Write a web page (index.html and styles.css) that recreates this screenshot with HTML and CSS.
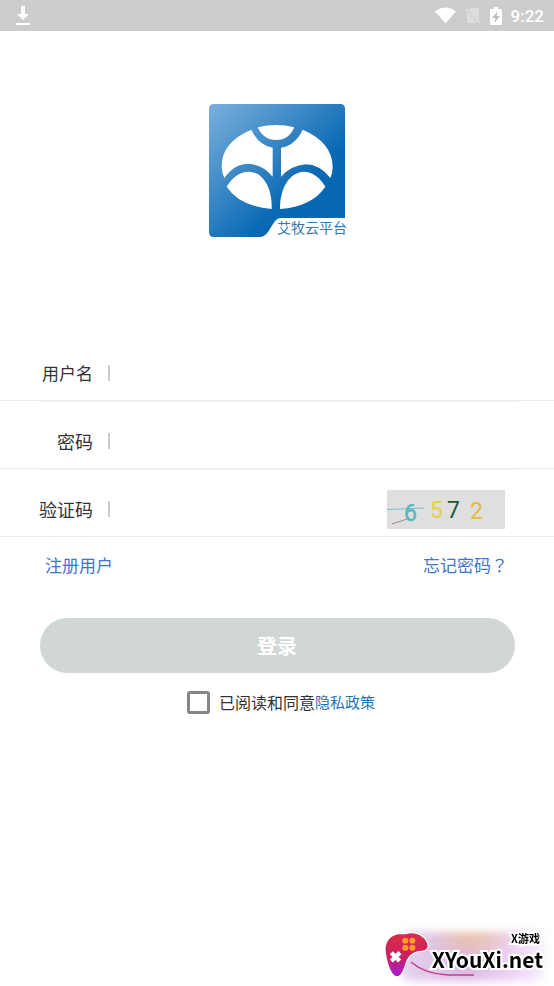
FILE: index.html
```html
<!DOCTYPE html>
<html lang="zh-CN">
<head>
<meta charset="utf-8">
<meta name="viewport" content="width=device-width, initial-scale=1">
<title>艾牧云平台</title>
<link rel="stylesheet" href="styles.css">
</head>
<body>
<header class="status">
  <svg class="download" viewBox="0 0 14 19" aria-hidden="true"><path d="M5 0h4v8h4l-6 6-6-6h4zM0 17h14v2H0z" fill="#fff"/></svg>
  <div class="status-right">
    <svg class="wifi" viewBox="0 0 22 17" aria-hidden="true"><path d="M0 4Q11-4 22 4L11 17z" fill="#fff"/></svg>
    <svg class="sim" viewBox="0 0 16 17" aria-hidden="true"><path d="M6 1h8v12L4 3zM2 5l10 11H2z" fill="#dedede"/><path d="M1 2l14 14" stroke="#e2e2e2" stroke-width="1.5"/></svg>
    <svg class="battery" viewBox="0 0 12 18" aria-hidden="true"><path d="M4 0h4v2h3q1 0 1 1v14q0 1-1 1H1q-1 0-1-1V3q0-1 1-1h3z" fill="#fff"/><path d="M8 4L2 11h3.500l-1 5L10 9H6.500z" fill="#bdbdbd"/></svg>
    <time class="clock">9:22</time>
  </div>
</header>
<main class="page">
  <div class="logo">
    <svg class="logo-art" viewBox="27 27 408 399" aria-hidden="true">
      <defs><linearGradient id="blue" x1="0" y1="0" x2="1" y2="1"><stop offset="0" stop-color="#7bb0dc"/><stop offset=".3" stop-color="#4890ca"/><stop offset=".66" stop-color="#0768b3"/><stop offset="1" stop-color="#0768b3"/></linearGradient></defs>
      <path d="M41 27H421Q435 27 435 41V369H244Q231 369 223 381L204 411Q194 426 178 426H41Q27 426 27 412V41Q27 27 41 27z" fill="url(#blue)"/>
      <g fill="#fff">
        <path d="M173 97Q229 83 283 97Q267 135 229 135Q190 135 173 97z"/>
        <path d="M154 104Q64 142 65 215Q66 235 73 249Q103 206 145 206Q188 208 218 245V158Q175 150 154 104z"/>
        <path d="M308 104Q397 142 398 215Q398 235 391 249Q358 208 317 208Q274 211 243 245V158Q287 150 308 104z"/>
        <path d="M80 275Q106 231 147 230C190 232 217 280 215 342Q119 334 80 275z"/>
        <path d="M376 275Q350 231 311 230C268 232 239 280 240 342Q337 334 376 275z"/>
      </g>
    </svg>
    <span class="logo-name">艾牧云平台</span>
  </div>
  <form class="login">
    <div class="row inset"><label class="small" for="user">用户名</label><input id="user" type="text"></div>
    <div class="row inset"><label for="pass">密码</label><input id="pass" type="password"></div>
    <div class="row"><label for="code">验证码</label><input id="code" type="text">
      <button class="captcha" type="button">
        <svg viewBox="0 0 118 39" aria-hidden="true"><path d="M0 19.500L37 18" stroke="#75bfc9"/><path d="M5 34L23 28" stroke="#9a8496"/>
        <g class="digits"><text x="17" y="31" fill="#55b7bd" stroke="#55b7bd" stroke-width=".4">6</text><text x="43" y="28" fill="#e3d044">5</text><text x="60" y="28" fill="#20592e">7</text><text x="83" y="29" fill="#e6b93b">2</text></g></svg>
      </button>
    </div>
    <nav class="links"><a href="#register">注册用户</a><a href="#forgot">忘记密码<span class="query" lang="zh-TW">？</span></a></nav>
    <button class="submit" type="submit">登录</button>
    <div class="consent"><input id="agree" type="checkbox"><label for="agree">已阅读和同意</label><a href="#privacy">隐私政策</a></div>
  </form>
</main>
<aside class="mark">
  <div class="haze"></div>
  <svg class="pad" viewBox="30 34 138 142" aria-hidden="true">
    <defs><linearGradient id="pad" x1="0" y1="0" x2="0" y2="1"><stop offset="0" stop-color="#dd2c48"/><stop offset=".55" stop-color="#cc2060"/><stop offset="1" stop-color="#a51edb"/></linearGradient></defs>
    <path d="M35 82C38 58 56 45 74 43Q87 42 96 43Q112 36 130 43C151 51 160 66 161 78Q160 91 144 92Q127 91 112 103Q101 111 95 128C88 148 83 168 68 169C51 168 34 113 35 82z" fill="url(#pad)" stroke="#fff" stroke-width="7" paint-order="stroke"/>
    <g fill="#ff9d24"><circle cx="94" cy="62" r="9"/><circle cx="115" cy="62" r="9"/><circle cx="94" cy="83" r="9"/><circle cx="115" cy="83" r="9"/></g>
    <path d="M52 98L77 123M78 98L52 123" stroke="#fff" stroke-width="13"/>
  </svg>
  <svg class="cable" viewBox="0 0 64 20" aria-hidden="true"><path d="M1 5Q15 17 38 18L64 18" fill="none" stroke="#c43c8c" stroke-width="1.500"/></svg>
  <div class="mark-text"><span class="mark-small">X游戏</span><span class="mark-big">XYouXi.net</span></div>
</aside>
</body>
</html>
```
FILE: styles.css
```css
* { box-sizing: border-box; }
body {
  margin: 0;
  min-height: 100vh;
  display: flex;
  flex-direction: column;
  background: #fff;
  color: #333;
  font-family: "Noto Sans CJK SC", sans-serif;
}
a { color: #3f76c8; text-decoration: none; }
svg { display: block; }
.status {
  display: flex;
  align-items: center;
  justify-content: space-between;
  height: 31px;
  padding: 0 10px 0 16px;
  background: #ccc;
}
.download { width: 14px; height: 19px; }
.status-right { display: flex; align-items: center; gap: 9px; }
.wifi { width: 21px; height: 17px; }
.sim { width: 16px; height: 17px; }
.battery { width: 12px; height: 18px; }
.clock { font: 500 17px/20px Roboto, sans-serif; color: #fff; }
.page { flex: 1; }
.logo {
  position: relative;
  width: 136px;
  margin: 73px auto 0;
}
.logo-art { width: 136px; height: 133px; }
.logo-name {
  position: absolute;
  right: -2px;
  bottom: 1px;
  font-size: 14px;
  line-height: 18px;
  color: #3478b4;
  white-space: nowrap;
}
.login { margin-top: 96px; }
.row {
  position: relative;
  display: flex;
  align-items: center;
  height: 68px;
  padding: 12px 49px 0 0;
  border-bottom: 1px solid #ebebeb;
}
.inset::after {
  content: "";
  position: absolute;
  left: 40px;
  right: 38px;
  bottom: -2px;
  height: 1px;
  background: #f3f3f3;
}
.row label {
  width: 93px;
  font-size: 18px;
  line-height: 24px;
  text-align: right;
}
.row .small { font-size: 17px; }
.row input {
  flex: 1;
  min-width: 0;
  height: 16px;
  margin-left: 15px;
  padding: 0 10px;
  border: 0;
  border-left: 2px solid #ccc;
  outline: 0;
  background: none;
  font: inherit;
}
.captcha {
  width: 118px;
  height: 39px;
  margin-top: 2px;
  padding: 0;
  border: 0;
  background: #dfdfdf;
}
.digits { font: 23px Roboto, sans-serif; }
.links {
  display: flex;
  justify-content: space-between;
  padding: 16px 46px 0 45px;
  font-size: 17px;
  line-height: 24px;
}
.query { font-family: "Noto Sans CJK TC", sans-serif; }
.submit {
  display: block;
  width: calc(100% - 79px);
  height: 55px;
  margin: 41px auto 0;
  padding: 0;
  border: 0;
  border-radius: 28px;
  background: #d1d7d5;
  color: #fff;
  font: 700 20px/28px "Noto Sans CJK SC", sans-serif;
}
.consent {
  display: flex;
  align-items: center;
  justify-content: center;
  margin-top: 17px;
  font-size: 16px;
  line-height: 24px;
}
.consent input {
  appearance: none;
  width: 23px;
  height: 23px;
  margin: 0 9px 0 8px;
  border: 3px solid #858585;
  border-radius: 3px;
  background: #fff;
}
.consent a { color: #1d74b4; font-size: 15px; }
.mark {
  position: fixed;
  right: 0;
  bottom: 0;
  width: 170px;
  height: 58px;
}
.haze {
  position: absolute;
  inset: 4px 10px 5px 16px;
  border-radius: 10px;
  background:
    radial-gradient(ellipse at 50% 0, #ecc4a0, transparent 45%),
    linear-gradient(90deg, #e4d3ee, #dcb8e4 45%, #ecd0f4 75%, #f6ecfb);
  filter: blur(4px);
}
.pad { position: absolute; left: 0; top: 3px; width: 46px; height: 48px; }
.cable { position: absolute; left: 26px; top: 29px; width: 64px; height: 20px; }
.mark-text {
  position: absolute;
  right: 11px;
  top: 2px;
  display: flex;
  flex-direction: column;
  align-items: flex-end;
  gap: 1px;
  color: #000;
  font-weight: 700;
  -webkit-text-stroke: 4px #fff;
  paint-order: stroke fill;
}
.mark-small { padding-right: 3px; font-size: 11px; line-height: 16px; }
.mark-big { font-size: 21px; line-height: 25px; }
```
